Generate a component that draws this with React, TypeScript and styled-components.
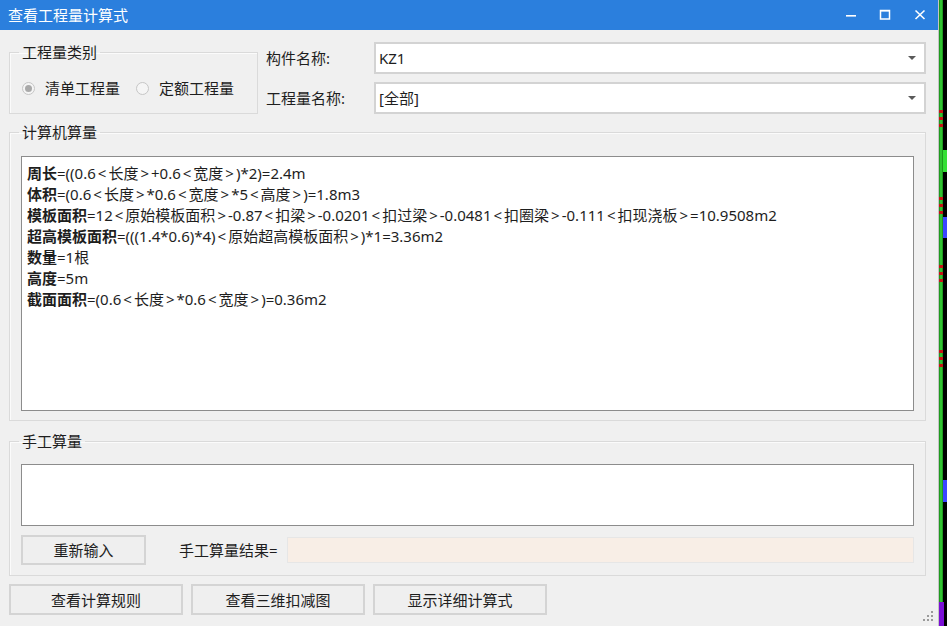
import styled, { createGlobalStyle } from "styled-components";

const FONT = `"Noto Sans", "Noto Sans CJK SC", sans-serif`;

const GlobalStyle = createGlobalStyle`
  html, body {
    margin: 0;
    padding: 0;
    background: #000;
  }
  body {
    font-family: ${FONT};
    font-size: 15px;
    color: #1e1e1e;
  }
  * {
    box-sizing: border-box;
  }
`;

const Screen = styled.div`
  display: flex;
  width: 947px;
  height: 626px;
  overflow: hidden;
`;

const Window = styled.div`
  position: relative;
  width: 939px;
  height: 626px;
  display: flex;
  flex-direction: column;
  background: #f0f0f0;
  border-right: 1px solid #c4c4c4;
`;

const TitleBar = styled.div`
  height: 30px;
  flex: none;
  display: flex;
  align-items: center;
  background: #2b7fdd;
  color: #fff;
  padding-left: 8px;
`;

const Title = styled.span`
  flex: 1;
  font-size: 15px;
  line-height: 30px;
`;

const WinButton = styled.div<{ $wide?: boolean }>`
  width: ${(p) => (p.$wide ? 36 : 34)}px;
  height: 30px;
  display: flex;
  align-items: center;
  justify-content: center;
`;

const Body = styled.div`
  flex: 1;
  display: flex;
  flex-direction: column;
  padding: 12px 12px 9px 9px;
`;

const TopRow = styled.div`
  display: flex;
  gap: 8px;
`;

const Group = styled.fieldset<{ $top?: number }>`
  margin: ${(p) => p.$top ?? 0}px 0 0 0;
  padding: 0 11px 0 11px;
  min-width: 0;
  border: 1px solid #dadada;
  box-shadow: inset 1px 1px 0 #fbfbfb;
`;

const Legend = styled.legend`
  margin-left: -2px;
  padding: 0 3px;
  font-size: 15px;
  line-height: 16px;
  color: #1e1e1e;
`;

const TypeGroup = styled(Group)`
  width: 249px;
  padding: 18px 10px 14px 11px;
`;

const RadioRow = styled.div`
  display: flex;
  align-items: center;
  height: 20px;
  gap: 16px;
  margin-left: 1px;
`;

const RadioItem = styled.label`
  display: flex;
  align-items: center;
  gap: 10px;
  line-height: 20px;
`;

const RadioCircle = styled.span<{ $checked?: boolean }>`
  width: 13px;
  height: 13px;
  border-radius: 50%;
  border: 1px solid #c6c6c6;
  background: #f5f5f5;
  display: flex;
  align-items: center;
  justify-content: center;
  &::after {
    content: "";
    width: 7px;
    height: 7px;
    border-radius: 50%;
    background: ${(p) => (p.$checked ? "#a9a9a9" : "transparent")};
  }
`;

const FieldGrid = styled.div`
  flex: 1;
  display: grid;
  grid-template-columns: 108px 1fr;
  grid-auto-rows: 32px;
  row-gap: 8px;
  align-items: center;
`;

const FieldLabel = styled.span`
  line-height: 20px;
`;

const Combo = styled.div`
  height: 32px;
  display: flex;
  align-items: center;
  background: #fff;
  border: 2px solid #d3d3d3;
  padding: 0 8px 0 3px;
`;

const ComboText = styled.span`
  flex: 1;
  line-height: 20px;
`;

const Caret = styled.span`
  width: 0;
  height: 0;
  border-left: 4px solid transparent;
  border-right: 4px solid transparent;
  border-top: 4px solid #5a5a5a;
`;

const CalcGroup = styled(Group)`
  padding-top: 16px;
  padding-bottom: 9px;
`;

const FormulaBox = styled.div`
  height: 255px;
  background: #fff;
  border: 1px solid #8c8c8c;
  padding: 6px 5px;
`;

const FormulaLine = styled.div`
  line-height: 21px;
  white-space: nowrap;
`;

const Strong = styled.b`
  font-weight: 700;
`;

const Bracket = styled.span`
  margin: 0 2px;
`;

const ManualGroup = styled(Group)`
  padding-top: 15px;
  padding-bottom: 10px;
`;

const ManualBox = styled.div`
  height: 62px;
  background: #fff;
  border: 1px solid #8c8c8c;
`;

const ManualRow = styled.div`
  display: flex;
  align-items: center;
  margin-top: 9px;
`;

const Button = styled.div<{ $width: number; $height?: number }>`
  width: ${(p) => p.$width}px;
  height: ${(p) => p.$height ?? 31}px;
  flex: none;
  display: flex;
  align-items: center;
  justify-content: center;
  background: #efefef;
  border: 2px solid #d4d4d4;
  line-height: 20px;
`;

const ResultLabel = styled.span`
  margin-left: 33px;
  width: 108px;
  line-height: 20px;
`;

const ResultInput = styled.div`
  flex: 1;
  height: 26px;
  background: #f8eee6;
  border: 1px solid #e6e6e6;
`;

const ButtonBar = styled.div`
  display: flex;
  gap: 8px;
  margin-top: 8px;
`;

const Grip = styled.svg`
  position: absolute;
  right: 4px;
  bottom: 4px;
`;

const Strip = styled.svg`
  flex: none;
  display: block;
`;

const formulas: [string, string][] = [
  ["周长", "=((0.6<长度>+0.6<宽度>)*2)=2.4m"],
  ["体积", "=(0.6<长度>*0.6<宽度>*5<高度>)=1.8m3"],
  [
    "模板面积",
    "=12<原始模板面积>-0.87<扣梁>-0.0201<扣过梁>-0.0481<扣圈梁>-0.111<扣现浇板>=10.9508m2",
  ],
  ["超高模板面积", "=(((1.4*0.6)*4)<原始超高模板面积>)*1=3.36m2"],
  ["数量", "=1根"],
  ["高度", "=5m"],
  ["截面面积", "=(0.6<长度>*0.6<宽度>)=0.36m2"],
];

const redMarks = [110, 117, 124, 197, 204, 211, 265, 272, 279, 350, 357, 364];

// the original font draws < and > with wide side bearings
function Expr({ text }: { text: string }) {
  return (
    <>
      {text.split(/([<>])/).map((part, i) =>
        part === "<" || part === ">" ? <Bracket key={i}>{part}</Bracket> : part
      )}
    </>
  );
}

export default function App() {
  return (
    <Screen>
      <GlobalStyle />
      <Window>
        <TitleBar>
          <Title>查看工程量计算式</Title>
          <WinButton>
            <svg width="12" height="12" viewBox="0 0 12 12">
              <rect x="1" y="6" width="10" height="1.6" fill="#fff" />
            </svg>
          </WinButton>
          <WinButton>
            <svg width="12" height="12" viewBox="0 0 12 12">
              <rect x="1.5" y="1.5" width="9" height="8.5" fill="none" stroke="#fff" strokeWidth="1.5" />
              <rect x="1.5" y="1" width="9" height="1.5" fill="#fff" />
            </svg>
          </WinButton>
          <WinButton $wide>
            <svg width="12" height="12" viewBox="0 0 12 12">
              <path d="M1.5 1.5 L10.5 10 M10.5 1.5 L1.5 10" stroke="#fff" strokeWidth="1.6" />
            </svg>
          </WinButton>
        </TitleBar>

        <Body>
          <TopRow>
            <TypeGroup $top={2}>
              <Legend>工程量类别</Legend>
              <RadioRow>
                <RadioItem>
                  <RadioCircle $checked />
                  清单工程量
                </RadioItem>
                <RadioItem>
                  <RadioCircle />
                  定额工程量
                </RadioItem>
              </RadioRow>
            </TypeGroup>
            <FieldGrid>
              <FieldLabel>构件名称:</FieldLabel>
              <Combo>
                <ComboText>KZ1</ComboText>
                <Caret />
              </Combo>
              <FieldLabel>工程量名称:</FieldLabel>
              <Combo>
                <ComboText>[全部]</ComboText>
                <Caret />
              </Combo>
            </FieldGrid>
          </TopRow>

          <CalcGroup $top={10}>
            <Legend>计算机算量</Legend>
            <FormulaBox>
              {formulas.map(([name, expr]) => (
                <FormulaLine key={name}>
                  <Strong>{name}</Strong>
                  <Expr text={expr} />
                </FormulaLine>
              ))}
            </FormulaBox>
          </CalcGroup>

          <ManualGroup $top={12}>
            <Legend>手工算量</Legend>
            <ManualBox />
            <ManualRow>
              <Button $width={125} $height={30}>
                重新输入
              </Button>
              <ResultLabel>手工算量结果=</ResultLabel>
              <ResultInput />
            </ManualRow>
          </ManualGroup>

          <ButtonBar>
            <Button $width={174}>查看计算规则</Button>
            <Button $width={174}>查看三维扣减图</Button>
            <Button $width={174}>显示详细计算式</Button>
          </ButtonBar>
        </Body>

        <Grip width="11" height="11" viewBox="0 0 11 11">
          {[
            [8, 0],
            [8, 4],
            [4, 4],
            [8, 8],
            [4, 8],
            [0, 8],
          ].map(([x, y]) => (
            <rect key={`${x}-${y}`} x={x} y={y} width="2" height="2" fill="#9a9a9a" />
          ))}
        </Grip>
      </Window>

      <Strip width="8" height="626" viewBox="0 0 8 626">
        <rect x="0" y="0" width="8" height="626" fill="#000" />
        <rect x="0" y="0" width="4" height="626" fill="#1f9a1f" />
        <rect x="1" y="0" width="2" height="626" fill="#31c231" />
        {redMarks.map((y) => (
          <rect key={y} x="0" y={y} width="4" height="3" fill="#c81414" />
        ))}
        <rect x="4" y="150" width="4" height="22" fill="#36e036" />
        <rect x="4" y="217" width="4" height="21" fill="#3b46ff" />
        <rect x="4" y="480" width="4" height="22" fill="#3b46ff" />
        <rect x="0" y="602" width="5" height="24" fill="#7a0fd6" />
      </Strip>
    </Screen>
  );
}
